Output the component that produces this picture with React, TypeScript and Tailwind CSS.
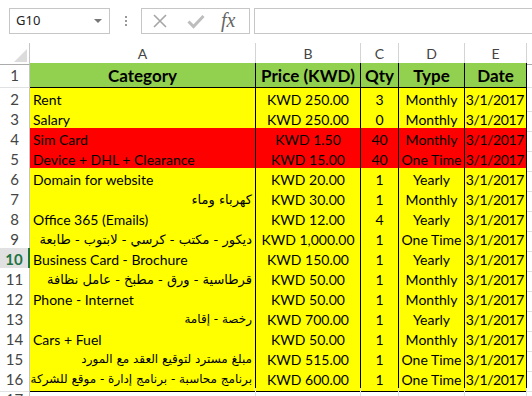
import React from 'react'

type Row = { cat: string; price: string; qty: string; type: string; red?: boolean; ar?: string }

const rows: Row[] = [
  { cat: 'Rent', price: 'KWD 250.00', qty: '3', type: 'Monthly' },
  { cat: 'Salary', price: 'KWD 250.00', qty: '0', type: 'Monthly' },
  { cat: 'Sim Card', price: 'KWD 1.50', qty: '40', type: 'Monthly', red: true },
  { cat: 'Device + DHL + Clearance', price: 'KWD 15.00', qty: '40', type: 'One Time', red: true },
  { cat: 'Domain for website', price: 'KWD 20.00', qty: '1', type: 'Yearly' },
  { cat: 'كهرباء وماء', price: 'KWD 30.00', qty: '1', type: 'Monthly', ar: 'text-[13px]' },
  { cat: 'Office 365 (Emails)', price: 'KWD 12.00', qty: '4', type: 'Yearly' },
  { cat: 'ديكور - مكتب - كرسي - لابتوب - طابعة', price: 'KWD 1,000.00', qty: '1', type: 'One Time', ar: 'text-[13px]' },
  { cat: 'Business Card - Brochure', price: 'KWD 150.00', qty: '1', type: 'Yearly' },
  { cat: 'قرطاسية - ورق - مطبخ - عامل نظافة', price: 'KWD 50.00', qty: '1', type: 'Monthly', ar: 'text-[13px]' },
  { cat: 'Phone - Internet', price: 'KWD 50.00', qty: '1', type: 'Monthly' },
  { cat: 'رخصة - إقامة', price: 'KWD 700.00', qty: '1', type: 'Yearly', ar: 'text-[12px]' },
  { cat: 'Cars + Fuel', price: 'KWD 50.00', qty: '1', type: 'Monthly' },
  { cat: 'مبلغ مسترد لتوقيع العقد مع المورد', price: 'KWD 515.00', qty: '1', type: 'One Time', ar: 'text-[12px]' },
  { cat: 'برنامج محاسبة - برنامج إدارة - موقع للشركة', price: 'KWD 600.00', qty: '1', type: 'One Time', ar: 'text-[12px]' },
]

const cols = 'grid grid-cols-[30px_226px_105px_38px_66px_62px_1fr]'

function RowHead ({ n }: { n: number }) {
  if (n === 10) {
    return (
      <div className="flex items-center justify-center bg-[#e1e1e1] border-r-2 border-r-[#217346] border-b border-b-[#d4d4d4] font-bold text-[15px] text-[#217346]">
        {n}
      </div>
    )
  }
  return (
    <div className="flex items-center justify-center bg-white border-r border-r-[#c6c6c6] border-b border-b-[#e1e1e1] text-[15px] text-[#444]">
      {n}
    </div>
  )
}

export default function App () {
  return (
    <div className="w-[532px] h-[396px] overflow-hidden bg-white text-black font-['Lato',sans-serif] text-[14px]">
      {/* formula bar */}
      <div className="h-[43px] flex items-start pt-2 pl-[9px]">
        <div className="w-[101px] h-[26px] border border-[#c6c6c6] flex items-center justify-between pl-[6px] pr-[7px] font-['Noto_Sans',sans-serif] text-[13px] text-[#222]">
          <span>G10</span>
          <span className="w-0 h-0 border-l-[4px] border-r-[4px] border-t-[4px] border-l-transparent border-r-transparent border-t-[#777]" />
        </div>
        <div className="w-[31px] h-[26px] flex flex-col items-center justify-center gap-[2px]">
          <span className="w-[2px] h-[2px] bg-[#999]" />
          <span className="w-[2px] h-[2px] bg-[#999]" />
          <span className="w-[2px] h-[2px] bg-[#999]" />
        </div>
        <div className="w-[109px] h-[26px] border border-[#c6c6c6] flex items-center pl-[10px]">
          <svg width="16" height="16" viewBox="0 0 16 16" className="mr-[19px]">
            <path d="M2 2 L14 14 M14 2 L2 14" stroke="#a6a6a6" strokeWidth="1.6" fill="none" />
          </svg>
          <svg width="18" height="16" viewBox="0 0 18 16" className="mr-[16px]">
            <path d="M1.5 8.5 L6.5 13.5 L16.5 3" stroke="#bdbdbd" strokeWidth="3" fill="none" />
          </svg>
          <span className="font-['Liberation_Serif',serif] italic text-[20px] leading-none text-[#666] -mt-[2px]">fx</span>
        </div>
        <div className="ml-1 flex-1 h-[26px] border-y border-l border-[#c6c6c6]" />
      </div>

      {/* column headers */}
      <div className={`${cols} h-[20px] text-[#444]`}>
        <div className="relative border-r border-r-[#c6c6c6] border-b border-b-[#ababab]">
          <span className="absolute right-[2px] bottom-[2px] w-0 h-0 [border-bottom:13px_solid_#dcdcdc] [border-left:13px_solid_transparent]" />
        </div>
        {['A', 'B', 'C', 'D', 'E'].map(l => (
          <div key={l} className="flex items-center justify-center border-r border-r-[#d4d4d4] border-b border-b-[#ababab]">{l}</div>
        ))}
        <div className="border-b border-b-[#ababab]" />
      </div>

      {/* header row */}
      <div className={`${cols} h-[25px]`}>
        <RowHead n={1} />
        {['Category', 'Price (KWD)', 'Qty', 'Type', 'Date'].map(h => (
          <div key={h} className="flex items-center justify-center bg-[#92d050] border-r border-b border-black font-bold text-[17px] leading-none whitespace-nowrap overflow-hidden">{h}</div>
        ))}
        <div className="border-b border-b-[#e1e1e1]" />
      </div>

      {rows.map((r, i) => {
        const bg = r.red ? 'bg-[#ff0000]' : 'bg-[#ffff00]'
        return (
          <div key={i} className={`${cols} h-[20px]`}>
            <RowHead n={i + 2} />
            <div className={`${bg} border-r border-b border-black flex items-center px-[3px] whitespace-nowrap overflow-hidden ${r.ar ? 'justify-end' : ''}`}>
              {r.ar
                ? <span dir="rtl" className={`font-['DejaVu_Sans',sans-serif] ${r.ar}`}>{r.cat}</span>
                : r.cat}
            </div>
            <div className={`${bg} border-r border-b border-black flex items-center justify-center whitespace-nowrap`}>{r.price}</div>
            <div className={`${bg} border-r border-b border-black flex items-center justify-center`}>{r.qty}</div>
            <div className={`${bg} border-r border-b border-black flex items-center justify-center whitespace-nowrap`}>{r.type}</div>
            <div className={`${bg} border-r border-b border-black flex items-center justify-end pr-[2px] tracking-[-0.4px]`}>3/1/2017</div>
            <div className="border-b border-b-[#e1e1e1]" />
          </div>
        )
      })}

      {/* row 17 */}
      <div className={`${cols} h-[20px]`}>
        <div className="flex items-center justify-center border-r border-r-[#c6c6c6] text-[15px] text-[#444]">17</div>
        {[0, 1, 2, 3, 4].map(k => (
          <div key={k} className="border-r border-r-[#e1e1e1]" />
        ))}
        <div />
      </div>
    </div>
  )
}
